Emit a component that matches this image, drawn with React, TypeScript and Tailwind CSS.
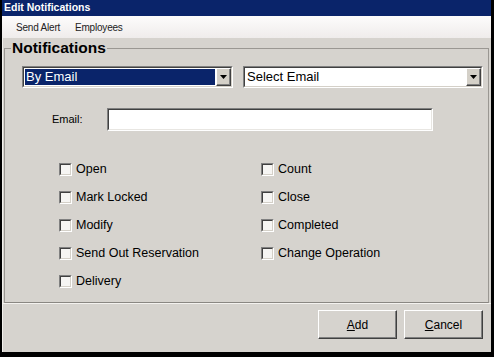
import React from 'react';

const leftChecks = ['Open', 'Mark Locked', 'Modify', 'Send Out Reservation', 'Delivery'];
const rightChecks = ['Count', 'Close', 'Completed', 'Change Operation'];

function DropButton() {
  return (
    <div className="w-[15px] h-full bg-[#d4d0c8] border border-t-white border-l-white border-b-[#404040] border-r-[#404040] flex items-center justify-center shadow-[inset_-1px_-1px_0_#808080]">
      <svg width="7" height="4" viewBox="0 0 7 4">
        <path d="M0 0h7L3.5 4z" fill="#000" />
      </svg>
    </div>
  );
}

function Combo({ label, selected, width }: { label: string; selected?: boolean; width: string }) {
  return (
    <div className={`${width} h-[22px] border border-t-[#808080] border-l-[#808080] border-b-white border-r-white`}>
      <div className="h-full border border-t-[#404040] border-l-[#404040] border-b-[#d4d0c8] border-r-[#d4d0c8] bg-white flex">
        <div className="flex-1 p-[1px]">
          <div
            className={`h-full flex items-center pl-[1px] text-[13px] ${
              selected ? 'bg-[#0a246a] text-white' : 'text-black'
            }`}
          >
            {label}
          </div>
        </div>
        <DropButton />
      </div>
    </div>
  );
}

function Check({ label }: { label: string }) {
  return (
    <div className="h-[28px] flex items-center gap-[4px]">
      <div className="w-[13px] h-[13px] border border-t-[#808080] border-l-[#808080] border-b-white border-r-white">
        <div className="w-full h-full bg-[#f6f5f3] border border-t-[#404040] border-l-[#404040] border-b-[#d4d0c8] border-r-[#d4d0c8]" />
      </div>
      <span className="text-[12.5px] text-black">{label}</span>
    </div>
  );
}

function WinButton({ children }: { children: React.ReactNode }) {
  return (
    <button className="w-[79px] h-[29px] bg-[#d6d3ce] border border-t-white border-l-white border-b-[#404040] border-r-[#404040] shadow-[inset_-1px_-1px_0_#808080] text-[12px] text-black">
      {children}
    </button>
  );
}

export default function App() {
  return (
    <div className="w-[494px] h-[357px] bg-black pl-[2px] pr-[3px] pb-[5px] flex flex-col font-['Liberation_Sans',Arial,sans-serif]">
      {/* Title bar */}
      <div className="h-[16px] bg-[#0a246a] flex items-center pl-[2px] text-[10.5px] font-bold text-white">
        Edit Notifications
      </div>

      {/* Menu bar */}
      <div className="h-[22px] bg-gradient-to-b from-[#fdfcfc] to-[#efeceb] flex items-center text-[10px] text-[#222] tracking-[-0.2px]">
        <span className="ml-[14px] w-[59px]">Send Alert</span>
        <span>Employees</span>
      </div>

      {/* Body */}
      <div className="flex-1 bg-[#d6d3ce] flex flex-col border-l border-l-[#f2f0ec]">
        <fieldset className="flex-1 ml-[1px] mr-[2px] border border-[#9a9792] border-b-[#8a8782]">
          <legend className="ml-[6px] px-[1px] text-[15.5px] font-bold leading-[20px] text-black">
            Notifications
          </legend>

          <div className="pt-[8px] pl-[17px] flex gap-[10px]">
            <Combo label="By Email" selected width="w-[211px]" />
            <Combo label="Select Email" width="w-[240px]" />
          </div>

          <div className="mt-[20px] pl-[47px] flex items-center">
            <span className="w-[55px] text-[11px] text-black">Email:</span>
            <div className="w-[326px] h-[23px] border border-t-[#808080] border-l-[#808080] border-b-white border-r-white">
              <div className="w-full h-full bg-white border border-t-[#404040] border-l-[#404040] border-b-[#e8e6e2] border-r-[#e8e6e2]" />
            </div>
          </div>

          <div className="mt-[24px] pl-[54px] grid grid-cols-[202px_202px]">
            <div className="flex flex-col">
              {leftChecks.map((c) => (
                <Check key={c} label={c} />
              ))}
            </div>
            <div className="flex flex-col">
              {rightChecks.map((c) => (
                <Check key={c} label={c} />
              ))}
            </div>
          </div>
        </fieldset>

        {/* Footer */}
        <div className="h-[49px] border-t border-t-[#f4f2ef] pt-[6px] pr-[8px] flex justify-end gap-[7px]">
          <WinButton>
            <span className="underline">A</span>dd
          </WinButton>
          <WinButton>
            <span className="underline">C</span>ancel
          </WinButton>
        </div>
      </div>
    </div>
  );
}
